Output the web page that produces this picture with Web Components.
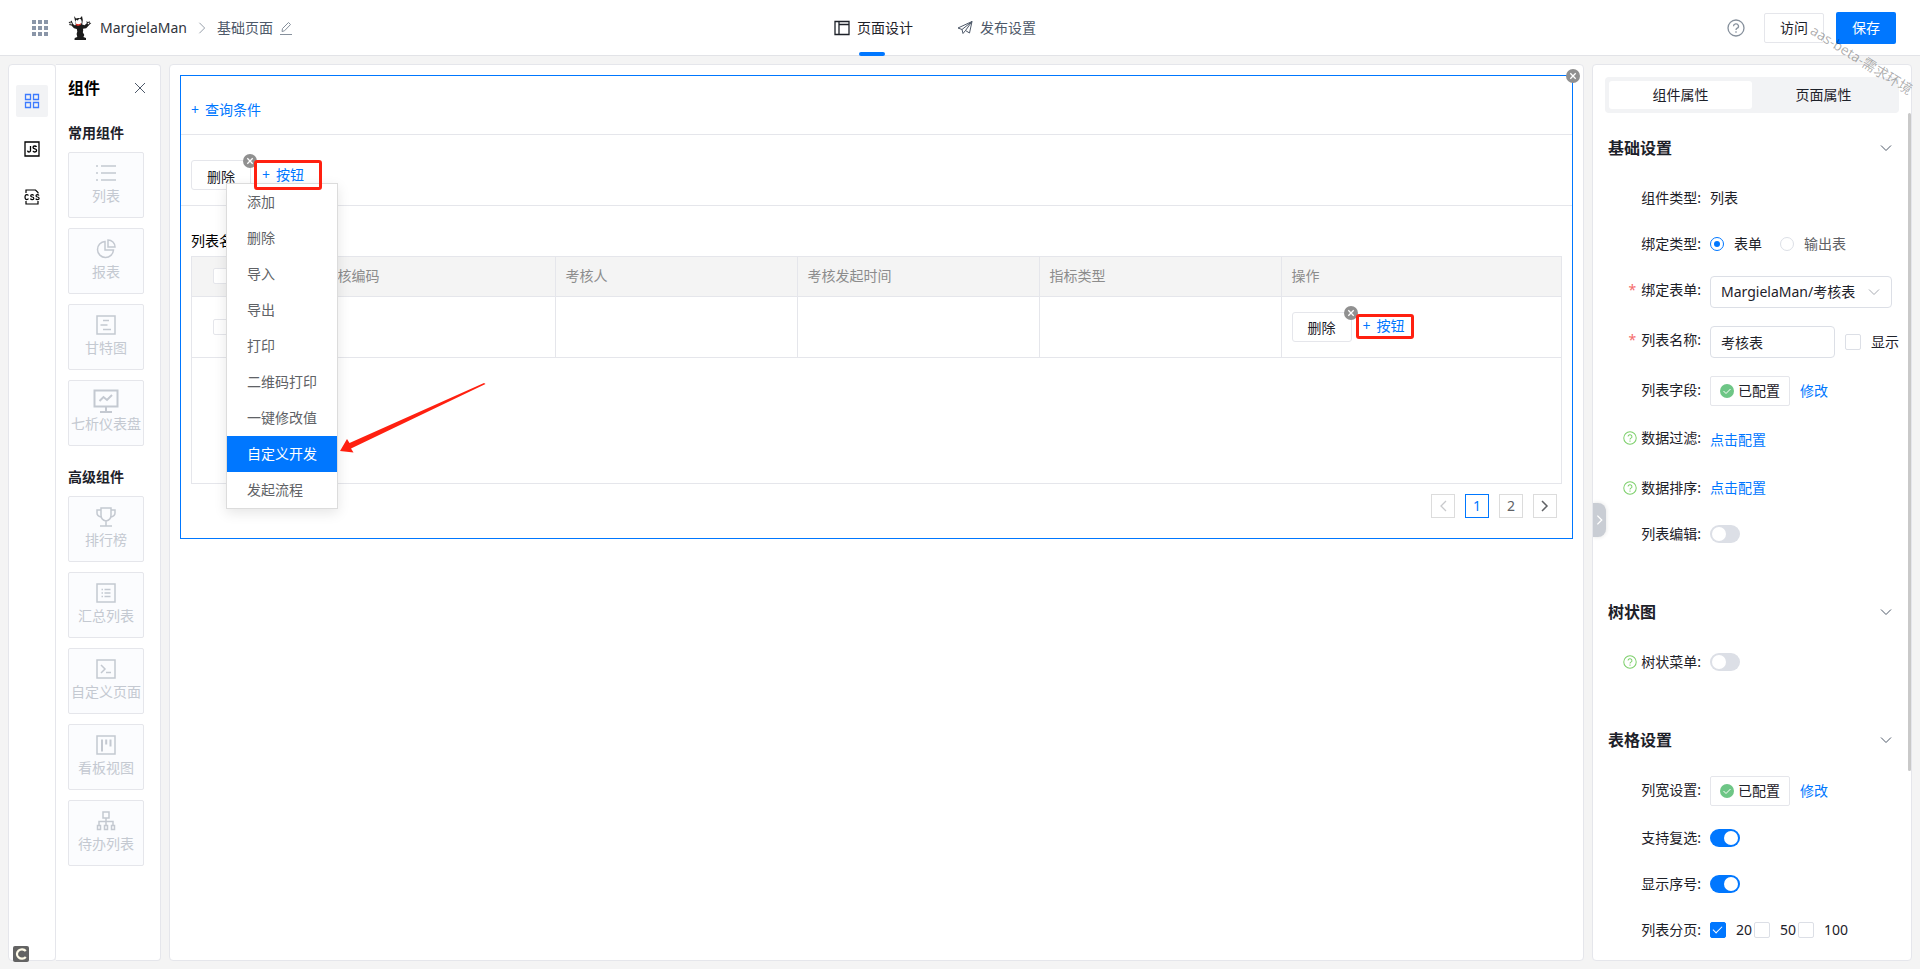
<!DOCTYPE html>
<html lang="zh-CN">
<head>
<meta charset="utf-8">
<meta name="viewport" content="width=device-width, initial-scale=1">
<title>页面设计</title>
<style>
  html, body { margin: 0; height: 100%; }
  body {
    font: 14px/20px "Noto Sans", "Noto Sans CJK SC", sans-serif;
    color: #1d2129;
    background: #f4f4f4;
    --primary: #0077ff;
    --line: #e5e6eb;
    --mark: #ff2010;
  }
</style>
</head>
<body>
<app-shell></app-shell>

<script>
const BASE = `
  *, *::before, *::after { box-sizing: border-box; }
  button, input, select { font: inherit; color: inherit; margin: 0; }
  button { background: none; border: 0; padding: 0; cursor: pointer; }
  a { color: var(--primary); text-decoration: none; }
  h2, h3, ul, p { margin: 0; padding: 0; list-style: none; }
`;

function define(name, css, html) {
  customElements.define(name, class extends HTMLElement {
    constructor() {
      super();
      const root = this.attachShadow({ mode: 'open' });
      const tpl = document.createElement('template');
      tpl.innerHTML = `<style>${BASE}${css}</style>` + (typeof html === 'function' ? html(this) : html);
      root.append(tpl.content.cloneNode(true));
    }
  });
}

const ICONS = {
  apps: [18, `<g fill="#8a96a8" stroke="none"><path d="M1 1h4v4H1zM7 1h4v4H7zM13 1h4v4h-4zM1 7h4v4H1zM7 7h4v4H7zM13 7h4v4h-4zM1 13h4v4H1zM7 13h4v4H7zM13 13h4v4h-4z"/></g>`],
  logo: [24, `<g stroke="none"><path fill="#1b1b1b" d="M6 0l2 2.500q2-.8 4-.2L14 0l.8 4-.6 4.500 2.300.8 2.300-2L18.500 5l1.500 1.300L21.500 5l.2 1.700 1.600.3-1.600 1.600-3.500 3.700-3.200.4q.5 2-.2 3.600l1.500 2.700-.9 2 2.600 1v2H6.500l.2-2 2.600-1-.7-3 .7-2.600-.5-2.400L6 12.200 3.500 9.500 1 9l1-1.500L.5 6l2-.2L3.500 4.500l.8 1.700L5 8l2 1.600.8-1z"/><path fill="#fff" d="M7.300 5.200q1.200-2.800 2.500-.4 1-3 3.300-1.400l.7 2.600q-.3 3-3.600 3.200Q7.500 8.500 7.300 5.200zM2 6.500l1.500.2.5 1.500-1.300.2zM19.600 7l1.500-.3.200 1-1.300.8z"/><path d="M7.800 7.600q3 1.600 5.300-.6l-.7 1.900q-2.200 1.500-4.100.3z" fill="#e02b20"/><circle cx="8.700" cy="5.600" r=".7"/><circle cx="11.800" cy="5.300" r=".7"/></g>`],
  right: [16, `<path d="M5 2l6 6-6 6"/>`],
  left: [16, `<path stroke-width="1.300" d="M11 3L6 8l5 5"/>`],
  next: [16, `<path stroke-width="1.500" d="M5 3l5 5-5 5"/>`],
  down: [12, `<path d="M1 3.500l5 5 5-5"/>`],
  edit: [14, `<path d="M1 13.500h12M3 10.500l.5-3L9.500 1.500l2 2L5.500 9.800z"/>`],
  close: [12, `<path d="M1 1l10 10M11 1L1 11"/>`],
  layout: [16, `<path stroke-width="1.300" d="M1 1.500h14v13H1zM5 1.500v13M5 4.500h10"/>`],
  plane: [16, `<path d="M1 8L15 1.500 12.500 13 8.500 10.500 6 13.500 5 9.500zM5 9.500L15 1.500 8.500 10.500"/>`],
  help: [18, `<g stroke-width="1.300"><circle cx="9" cy="9" r="8"/><path d="M6.500 7.200a2.500 2.300 0 1 1 3.700 2Q9 9.800 9 11M9 12.300v1.400"/></g>`],
  grid: [16, `<path stroke-width="1.300" d="M1.500 1.500h5v5h-5zM9.500 1.500h5v5h-5zM1.500 9.500h5v5h-5zM9.500 9.500h5v5h-5z"/>`],
  js: [16, `<g stroke="#000" stroke-width="1.300"><path d="M1 1h14v14H1z"/><path d="M6.500 5v4.500q0 1.500-1.500 1.500-1.300 0-1.500-1.300M12.500 6q-.5-1-1.800-1Q9 5 9 6.300t1.800 1.600q1.800.3 1.800 1.600T10.800 11Q9.300 11 9 9.800"/></g>`],
  css: [16, `<g stroke="#000"><path stroke-width="1.200" d="M2 4V1h9.500L14 3.500v1M2 12v3h12v-3"/><path stroke-width="1.200" d="M4.500 6.500q-.7-.9-1.800-.9Q1 5.600 1 8.100t1.700 2.500q1.100 0 1.800-.9M9.700 6.500q-.6-.9-1.600-.9-1.400 0-1.400 1.200t1.500 1.200 1.600 1.300-1.600 1.300q-1.200 0-1.800-.9M15 6.500q-.6-.9-1.600-.9-1.400 0-1.400 1.200t1.500 1.200 1.600 1.300-1.600 1.300q-1.200 0-1.800-.9"/></g>`],
  list: [20, `<path stroke-width="1.500" d="M5 3h15M5 10h15M5 17h15M0 3h2M0 10h2M0 17h2"/>`],
  pie: [20, `<path stroke-width="1.500" d="M9 2.500a8 8 0 1 0 8.500 8.500H9zM12 1v7h7a7 7 0 0 0-7-7z"/>`],
  gantt: [20, `<path stroke-width="1.500" d="M1 1h18v18H1zM7 5.500h6M4.500 10h7M7 14.500h8"/>`],
  board: [26, `<path stroke-width="2" d="M1.500 2.500h23v16h-23zM13 19v5M7 24h12M6.500 13l4-4 3.500 3 5-5"/>`],
  cup: [20, `<path stroke-width="1.500" d="M5 1h10v7q0 5-5 6-5-1-5-6zM5 3H1v3q0 3 4 4M15 3h4v3q0 3-4 4M10 14v4.500M4 19h12"/>`],
  summary: [20, `<path stroke-width="1.500" d="M1 1h18v18H1zM8.500 6.500h6M8.500 10h6M8.500 13.500h6M5.500 6.500h1.500M5.500 10h1.500M5.500 13.500h1.500"/>`],
  code: [20, `<path stroke-width="1.500" d="M1 1h18v18H1zM5 6l4 4-4 4M10 13.500h5"/>`],
  kanban: [20, `<path stroke-width="1.500" d="M1 1h18v18H1z"/><path stroke-width="2" d="M6 4.500v12M10.200 4.500v5M14.500 4.500v7"/>`],
  tree: [20, `<path stroke-width="1.500" d="M7 1h6v6H7zM10 7v7M3 14v-3.500h14V14M1.500 14.500h3v4h-3zM8.500 14.500h3v4h-3zM15.500 14.500h3v4h-3z"/>`],
  check: [14, `<circle cx="7" cy="7" r="7" fill="#6ec686" stroke="none"/><path stroke="#fff" d="M3.500 7l2.500 2.500 4.500-4.500"/>`],
  remove: [14, `<circle cx="7" cy="7" r="7" fill="#909090" stroke="none"/><path stroke="#fff" stroke-width="1.300" d="M4.300 4.300l5.400 5.400M9.700 4.300L4.300 9.700"/>`],
  record: [16, `<rect width="16" height="16" rx="2" fill="#636363" stroke="none"/><path stroke="#fffbe8" stroke-width="2.200" d="M12.800 5a5 4.700 0 1 0 0 6"/>`]
};

define('ui-icon', `
  :host { display: inline-flex; flex: none; }
  svg { display: block; fill: none; stroke: currentColor; }
`, el => {
  const [box, body] = ICONS[el.getAttribute('name')];
  const size = el.getAttribute('size') || box;
  return `<svg width="${size}" height="${size}" viewBox="0 0 ${box} ${box}" aria-hidden="true">${body}</svg>`;
});

define('app-header', `
  :host {
    display: grid; grid-template-columns: 1fr auto 1fr; height: 56px; flex: none;
    padding: 0 24px 0 31px; background: #fff; border-bottom: 1px solid #e2e3e7;
  }
  .crumbs { display: flex; align-items: center; color: #4e5969; }
  .crumbs button { display: flex; }
  .logo { margin: 0 8px 0 19px; }
  .app { color: #30343c; }
  .sep { margin: 0 8px; color: #86909c; }
  .crumbs .edit { margin-left: 6px; color: #86909c; }
  nav { display: flex; gap: 44px; margin-right: 57px; }
  nav a { position: relative; display: flex; align-items: center; gap: 7px; color: #4e5969; }
  nav a.on { color: #1d2129; }
  nav a.on::after {
    content: ""; position: absolute; bottom: -1px; left: 25px; width: 26px; height: 4px;
    border-radius: 2px; background: var(--primary);
  }
  .actions { display: flex; align-items: center; justify-content: flex-end; gap: 12px; }
  .help { display: flex; margin-right: 7px; color: #86909c; }
  .visit { width: 60px; height: 30px; border: 1px solid var(--line); border-radius: 2px; background: #fff; }
  .save { width: 60px; height: 32px; border-radius: 2px; background: var(--primary); color: #fff; }
`, `
  <div class="crumbs">
    <button aria-label="应用"><ui-icon name="apps"></ui-icon></button>
    <ui-icon class="logo" name="logo"></ui-icon>
    <span class="app">MargielaMan</span>
    <ui-icon class="sep" name="right" size="14"></ui-icon>
    <span>基础页面</span>
    <button class="edit" aria-label="编辑"><ui-icon name="edit"></ui-icon></button>
  </div>
  <nav>
    <a class="on" href="#design"><ui-icon name="layout"></ui-icon>页面设计</a>
    <a href="#publish"><ui-icon name="plane"></ui-icon>发布设置</a>
  </nav>
  <div class="actions">
    <button class="help" aria-label="帮助"><ui-icon name="help"></ui-icon></button>
    <button class="visit">访问</button>
    <button class="save">保存</button>
  </div>
`);

define('side-rail', `
  :host {
    display: flex; flex-direction: column; gap: 16px; width: 48px; padding: 20px 7px;
    background: #fff; border: 1px solid var(--line); border-radius: 4px;
  }
  button { display: flex; align-items: center; justify-content: center; width: 32px; height: 32px; border-radius: 2px; }
  .on { background: #f2f3f5; color: #3d7bff; }
`, `
  <button class="on" aria-label="组件"><ui-icon name="grid"></ui-icon></button>
  <button aria-label="脚本"><ui-icon name="js"></ui-icon></button>
  <button aria-label="样式"><ui-icon name="css"></ui-icon></button>
`);

define('palette-card', `
  :host {
    display: flex; flex-direction: column; align-items: center; justify-content: flex-end; height: 66px;
    padding-bottom: 11px; border: 1px solid var(--line); border-radius: 2px; background: #fbfcfe; color: #c4c9d1;
  }
  .icon { display: flex; align-items: center; justify-content: center; height: 26px; }
  .name { white-space: nowrap; line-height: 20px; }
`, el => `
  <span class="icon"><ui-icon name="${el.getAttribute('icon')}" size="${el.getAttribute('size') || 20}"></ui-icon></span>
  <span class="name"><slot></slot></span>
`);

define('component-palette', `
  :host {
    display: block; width: 105px; padding: 11px 14px 0 12px;
    background: #fff; border: 1px solid var(--line); border-left: 0; border-radius: 0 4px 4px 0;
  }
  header { display: flex; align-items: center; justify-content: space-between; height: 24px; }
  h2 { font-size: 16px; line-height: 24px; color: #000; }
  header button { display: flex; color: #4e5969; }
  h3 { font-size: 14px; line-height: 20px; margin: 21px 0 9px; }
  header + h3 { margin-top: 23px; }
  .cards { display: grid; gap: 10px; width: 76px; }
`, `
  <header><h2>组件</h2><button aria-label="关闭"><ui-icon name="close"></ui-icon></button></header>
  <h3>常用组件</h3>
  <div class="cards">
    <palette-card icon="list">列表</palette-card>
    <palette-card icon="pie">报表</palette-card>
    <palette-card icon="gantt">甘特图</palette-card>
    <palette-card icon="board" size="26">七析仪表盘</palette-card>
  </div>
  <h3>高级组件</h3>
  <div class="cards">
    <palette-card icon="cup">排行榜</palette-card>
    <palette-card icon="summary">汇总列表</palette-card>
    <palette-card icon="code">自定义页面</palette-card>
    <palette-card icon="kanban">看板视图</palette-card>
    <palette-card icon="tree">待办列表</palette-card>
  </div>
`);

define('action-button', `
  :host { position: relative; display: block; width: 60px; height: 30px; flex: none; }
  .main { width: 100%; height: 100%; padding-top: 3px; border: 1px solid var(--line); border-radius: 3px; background: #fff; }
  .x { position: absolute; right: -6px; top: -6px; display: flex; }
`, `
  <button class="main"><slot></slot></button>
  <button class="x" aria-label="移除"><ui-icon name="remove"></ui-icon></button>
`);

define('marked-add', `
  :host { position: relative; z-index: 3; display: flex; align-items: center; border: 3px solid var(--mark); border-radius: 3px; flex: none; }
  button { display: flex; gap: 6px; color: var(--primary); white-space: nowrap; }
`, `<button><span>+</span><slot></slot></button>`);

define('action-menu', `
  :host {
    display: block; width: 112px; background: #fff; border: 1px solid #dcdcdc;
    box-shadow: 0 4px 12px rgba(0, 0, 0, .1);
  }
  li { position: relative; }
  li button { display: block; width: 100%; height: 36px; padding-left: 20px; text-align: left; color: #606266; white-space: nowrap; }
  .on button { background: var(--primary); color: #fff; }
  svg { position: absolute; left: 113px; top: -54px; fill: var(--mark); }
`, `
  <ul>
    <li><button>添加</button></li>
    <li><button>删除</button></li>
    <li><button>导入</button></li>
    <li><button>导出</button></li>
    <li><button>打印</button></li>
    <li><button>二维码打印</button></li>
    <li><button>一键修改值</button></li>
    <li class="on"><button>自定义开发</button>
      <svg width="148" height="72" viewBox="0 0 148 72" aria-hidden="true"><path d="M0 69l7-12 2.500 4L144 1l1.500 1L11 66.500l2.500 4z"/></svg>
    </li>
    <li><button>发起流程</button></li>
  </ul>
`);

define('data-list', `
  :host { position: relative; display: block; border: 1px solid var(--primary); }
  .close { position: absolute; right: -8px; top: -7px; display: flex; }
  .query { padding: 24px 11px 14px 10px; border-bottom: 1px solid var(--line); line-height: 20px; }
  .query a { display: inline-flex; gap: 6px; vertical-align: top; }
  .tools { position: relative; display: flex; gap: 3px; padding: 25px 10px 15px; border-bottom: 1px solid var(--line); }
  .tools marked-add { width: 68px; height: 30px; padding: 0 0 1px 5px; }
  action-menu { position: absolute; left: 45px; top: 48px; z-index: 2; }
  .list { padding: 25px 10px 20px; }
  .title { color: #000; height: 25px; line-height: 20px; }
  .frame { height: 228px; border: 1px solid var(--line); }
  table { width: 100%; border-collapse: collapse; table-layout: fixed; }
  th, td { border-right: 1px solid var(--line); border-bottom: 1px solid var(--line); padding: 0 10px; text-align: left; }
  th:last-child, td:last-child { border-right: 0; }
  th { height: 39px; background: #f4f4f4; color: #8c8c8c; font-weight: 400; }
  td { height: 61px; }
  .c { width: 58px; text-align: center; }
  .n { width: 63px; text-align: center; }
  .f { width: 242px; }
  .no-r { border-right: 0; }
  .ops { display: flex; gap: 4px; align-items: flex-start; }
  .ops marked-add { width: 58px; height: 25px; margin-top: 2px; padding-left: 4px; }
  input { display: block; margin: auto; appearance: none; width: 16px; height: 16px; background: #fff; border: 1px solid var(--line); border-radius: 2px; }
  .pages { display: flex; justify-content: flex-end; gap: 10px; padding: 10px 5px 0; }
  .pages button { display: flex; align-items: center; justify-content: center; width: 24px; height: 24px; border: 1px solid #dcdcdc; color: #606266; }
  .pages .on { border-color: var(--primary); color: var(--primary); }
  .pages .off { color: #c8c9cc; }
`, `
  <button class="close" aria-label="移除"><ui-icon name="remove"></ui-icon></button>
  <div class="query"><a href="#query"><span>+</span><span>查询条件</span></a></div>
  <div class="tools">
    <action-button>删除</action-button>
    <marked-add>按钮</marked-add>
    <action-menu></action-menu>
  </div>
  <div class="list">
    <div class="title">列表名称</div>
    <div class="frame">
      <table>
        <thead><tr>
          <th class="c no-r"><input type="checkbox" aria-label="全选"></th><th class="n"></th>
          <th class="f">考核编码</th><th class="f">考核人</th><th class="f">考核发起时间</th><th class="f">指标类型</th><th>操作</th>
        </tr></thead>
        <tbody><tr>
          <td class="c no-r"><input type="checkbox" aria-label="选择"></td><td class="n"></td>
          <td></td><td></td><td></td><td></td>
          <td><div class="ops"><action-button>删除</action-button><marked-add>按钮</marked-add></div></td>
        </tr></tbody>
      </table>
    </div>
    <div class="pages">
      <button class="off" aria-label="上一页"><ui-icon name="left"></ui-icon></button>
      <button class="on">1</button>
      <button>2</button>
      <button aria-label="下一页"><ui-icon name="next"></ui-icon></button>
    </div>
  </div>
`);

define('design-canvas', `
  :host { display: block; min-width: 0; padding: 10px; background: #fff; border: 1px solid var(--line); border-radius: 4px; }
`, `<data-list></data-list>`);

define('prop-section', `
  :host { display: block; }
  header { display: flex; align-items: center; justify-content: space-between; padding: 0 19px 0 15px; margin-bottom: 24px; }
  h2 { font-size: 16px; line-height: 24px; }
  button { display: flex; color: #4e5969; }
`, el => `
  <header><h2>${el.getAttribute('heading')}</h2><button aria-label="折叠"><ui-icon name="down"></ui-icon></button></header>
  <slot></slot>
`);

define('prop-row', `
  :host { display: grid; grid-template-columns: 108px 1fr; column-gap: 9px; min-height: 28px; margin-bottom: 18px; }
  :host([tall]) { min-height: 32px; }
  .label { display: flex; align-items: center; justify-content: flex-end; height: 28px; white-space: nowrap; }
  .star { margin-right: 5px; color: #f56c6c; }
  ui-icon { margin-right: 4px; color: #7ccf6a; }
  .value { display: flex; align-items: center; white-space: nowrap; }
`, el => `
  <div class="label">${el.hasAttribute('required') ? '<span class="star">*</span>' : ''}${el.hasAttribute('tip') ? '<ui-icon name="help" size="14"></ui-icon>' : ''}<span>${el.getAttribute('label')}:</span></div>
  <div class="value"><slot></slot></div>
`);

define('toggle-switch', `
  :host { display: inline-block; }
  input { appearance: none; display: block; position: relative; width: 30px; height: 18px; border-radius: 9px; background: #dcdfe6; }
  input::after { content: ""; position: absolute; left: 2px; top: 2px; width: 14px; height: 14px; border-radius: 50%; background: #fff; }
  input:checked { background: var(--primary); }
  input:checked::after { left: 14px; }
`, el => `<input type="checkbox" role="switch" aria-label="${el.getAttribute('label')}" ${el.hasAttribute('on') ? 'checked' : ''}>`);

define('check-option', `
  :host { display: inline-block; }
  label { display: flex; align-items: center; }
  input { appearance: none; position: relative; flex: none; width: 16px; height: 16px; margin-right: 10px; border: 1px solid #dcdfe6; border-radius: 2px; }
  input[type=radio] { width: 14px; height: 14px; border-radius: 50%; }
  input[type=radio]:checked { border-color: var(--primary); }
  input[type=radio]:checked::after { content: ""; position: absolute; inset: 3px; border-radius: 50%; background: var(--primary); }
  input[type=checkbox]:checked { background: var(--primary); border-color: var(--primary); }
  input[type=checkbox]:checked::after { content: ""; position: absolute; left: 4px; top: 1px; width: 5px; height: 9px; border: solid #fff; border-width: 0 1px 1px 0; transform: rotate(45deg); }
`, el => `<label><input type="${el.getAttribute('type') || 'checkbox'}" ${el.hasAttribute('checked') ? 'checked' : ''}><span><slot></slot></span></label>`);

define('configured-button', `
  :host { display: flex; align-items: center; gap: 10px; }
  button { display: flex; align-items: center; justify-content: center; gap: 4px; width: 80px; height: 30px; border: 1px solid var(--line); border-radius: 2px; background: #fff; }
`, `<button><ui-icon name="check"></ui-icon>已配置</button><a href="#edit">修改</a>`);

define('property-panel', `
  :host {
    position: relative; display: block; width: 320px; padding-top: 12px; overflow: hidden;
    background: #fff; border: 1px solid var(--line); border-radius: 4px;
  }
  .tabs { display: grid; grid-template-columns: 143px 143px; height: 36px; margin: 0 12px 23px; padding: 4px; border-radius: 4px; background: #f2f3f5; }
  .tabs button.on { background: #fff; border-radius: 3px; }
  .sections { display: grid; gap: 34px; }
  prop-section:last-child prop-row:last-child { margin-bottom: 0; }
  .select { position: relative; width: 182px; }
  .select select, .name {
    appearance: none; width: 100%; height: 32px; padding: 0 0 0 10px;
    border: 1px solid #dcdfe6; border-radius: 4px; background: #fff;
  }
  .select ui-icon { position: absolute; right: 12px; top: 10px; color: #a8abb2; pointer-events: none; }
  .name { width: 125px; margin-right: 10px; }
  .muted { color: #606266; }
  .gap { margin-right: 18px; }
  .tight { margin-right: 2px; }
  .bar { position: absolute; right: 0; top: 48px; width: 3px; height: 658px; border-radius: 2px; background: #c9c9c9; }
  .fold {
    position: absolute; left: 0; top: 438px; display: flex; align-items: center; justify-content: center;
    width: 13px; height: 34px; border-radius: 0 8px 8px 0; background: #c9cdd4; color: #fff; box-shadow: 0 0 4px rgba(0, 0, 0, .12);
  }
`, `
  <div class="tabs"><button class="on">组件属性</button><button>页面属性</button></div>
  <div class="sections">
    <prop-section heading="基础设置">
      <prop-row label="组件类型">列表</prop-row>
      <prop-row label="绑定类型">
        <check-option class="gap" type="radio" checked>表单</check-option>
        <check-option class="muted" type="radio">输出表</check-option>
      </prop-row>
      <prop-row label="绑定表单" required>
        <span class="select"><select aria-label="绑定表单"><option>MargielaMan/考核表</option></select><ui-icon name="down"></ui-icon></span>
      </prop-row>
      <prop-row label="列表名称" required>
        <input class="name" type="text" aria-label="列表名称" value="考核表">
        <check-option>显示</check-option>
      </prop-row>
      <prop-row label="列表字段"><configured-button></configured-button></prop-row>
      <prop-row label="数据过滤" tip tall><a href="#filter">点击配置</a></prop-row>
      <prop-row label="数据排序" tip><a href="#sort">点击配置</a></prop-row>
      <prop-row label="列表编辑"><toggle-switch label="列表编辑"></toggle-switch></prop-row>
    </prop-section>
    <prop-section heading="树状图">
      <prop-row label="树状菜单" tip><toggle-switch label="树状菜单"></toggle-switch></prop-row>
    </prop-section>
    <prop-section heading="表格设置">
      <prop-row label="列宽设置"><configured-button></configured-button></prop-row>
      <prop-row label="支持复选"><toggle-switch label="支持复选" on></toggle-switch></prop-row>
      <prop-row label="显示序号"><toggle-switch label="显示序号" on></toggle-switch></prop-row>
      <prop-row label="列表分页">
        <check-option class="tight" checked>20</check-option>
        <check-option class="tight">50</check-option>
        <check-option>100</check-option>
      </prop-row>
    </prop-section>
  </div>
  <div class="bar"></div>
  <button class="fold" aria-label="收起"><ui-icon name="next" size="14"></ui-icon></button>
`);

define('app-shell', `
  :host { position: relative; display: flex; flex-direction: column; box-sizing: border-box; min-height: 100vh; overflow: hidden; }
  main { flex: 1; display: grid; grid-template-columns: auto 1fr auto; gap: 8px; padding: 8px; }
  .left { display: flex; }
  .mark {
    position: absolute; right: 0; top: 50px; transform: rotate(32deg); white-space: nowrap;
    color: rgba(0, 0, 0, .32); pointer-events: none;
  }
  .record { position: absolute; left: 13px; bottom: 7px; }
`, `
  <app-header></app-header>
  <main>
    <div class="left"><side-rail></side-rail><component-palette></component-palette></div>
    <design-canvas></design-canvas>
    <property-panel></property-panel>
  </main>
  <span class="mark">aas-beta-需求环境</span>
  <ui-icon class="record" name="record"></ui-icon>
`);
</script>
</body>
</html>
